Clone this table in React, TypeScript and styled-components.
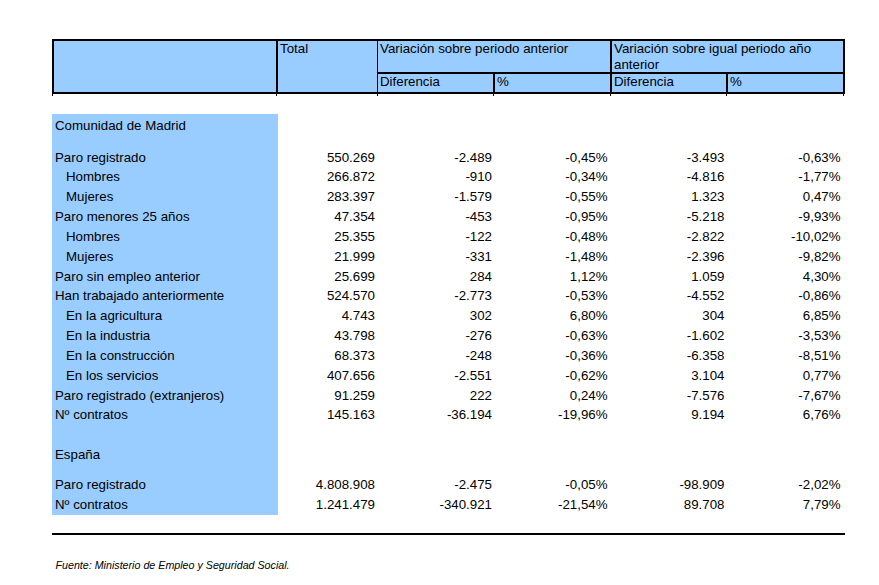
import React from "react";
import styled, { createGlobalStyle } from "styled-components";

type Line = {
    label: string;
    indent?: boolean;
    values: string[];
};

const madrid: Line[] = [
    { label: "Paro registrado", values: ["550.269", "-2.489", "-0,45%", "-3.493", "-0,63%"] },
    { label: "Hombres", indent: true, values: ["266.872", "-910", "-0,34%", "-4.816", "-1,77%"] },
    { label: "Mujeres", indent: true, values: ["283.397", "-1.579", "-0,55%", "1.323", "0,47%"] },
    { label: "Paro menores 25 años", values: ["47.354", "-453", "-0,95%", "-5.218", "-9,93%"] },
    { label: "Hombres", indent: true, values: ["25.355", "-122", "-0,48%", "-2.822", "-10,02%"] },
    { label: "Mujeres", indent: true, values: ["21.999", "-331", "-1,48%", "-2.396", "-9,82%"] },
    { label: "Paro sin empleo anterior", values: ["25.699", "284", "1,12%", "1.059", "4,30%"] },
    { label: "Han trabajado anteriormente", values: ["524.570", "-2.773", "-0,53%", "-4.552", "-0,86%"] },
    { label: "En la agricultura", indent: true, values: ["4.743", "302", "6,80%", "304", "6,85%"] },
    { label: "En la industria", indent: true, values: ["43.798", "-276", "-0,63%", "-1.602", "-3,53%"] },
    { label: "En la construcción", indent: true, values: ["68.373", "-248", "-0,36%", "-6.358", "-8,51%"] },
    { label: "En los servicios", indent: true, values: ["407.656", "-2.551", "-0,62%", "3.104", "0,77%"] },
    { label: "Paro registrado (extranjeros)", values: ["91.259", "222", "0,24%", "-7.576", "-7,67%"] },
    { label: "Nº contratos", values: ["145.163", "-36.194", "-19,96%", "9.194", "6,76%"] }
];

const espana: Line[] = [
    { label: "Paro registrado", values: ["4.808.908", "-2.475", "-0,05%", "-98.909", "-2,02%"] },
    { label: "Nº contratos", values: ["1.241.479", "-340.921", "-21,54%", "89.708", "7,79%"] }
];

// right padding of each numeric column, as the spreadsheet leaves it
const numPad = [3, 3, 4.5, 3.5, 4.5];

const GlobalStyle = createGlobalStyle`
    body {
        margin: 0;
        background: #ffffff;
        color: #000000;
        font-family: "Liberation Sans", Arial, sans-serif;
        font-size: 13.3px;
    }
`;

const Page = styled.div`
    width: 793px;
    padding: 39px 0 0 52px;
`;

const HeaderGrid = styled.div`
    display: grid;
    grid-template-columns: 224px 100px 117px 117px 116px 115px;
    grid-template-rows: 33px 18px;
    border: 2px solid #000;
    background: #99ccff;
`;

const HeadCell = styled.div<{ $col: string; $row: string; $right?: number; $bottom?: number }>`
    grid-column: ${(p) => p.$col};
    grid-row: ${(p) => p.$row};
    border-right: ${(p) => p.$right ?? 0}px solid #000;
    border-bottom: ${(p) => p.$bottom ?? 0}px solid #000;
    padding: 0 2px;
    line-height: 16px;
    overflow: hidden;
`;

const TickRow = styled.div`
    display: grid;
    grid-template-columns: 224px 101px 116px 117px 116px 117px 2px;
    height: 2px;
    margin-bottom: 18px;
`;

const Tick = styled.div`
    border-left: 1px solid #000;
`;

const Row = styled.div<{ $height: number }>`
    display: grid;
    grid-template-columns: 226px 100px 117px 117px 116px 117px;
    height: ${(p) => p.$height}px;
    line-height: ${(p) => p.$height}px;
    white-space: nowrap;
`;

const Label = styled.div<{ $indent?: boolean }>`
    background: #99ccff;
    padding-left: ${(p) => (p.$indent ? 14 : 3)}px;
`;

const TitleLabel = styled.div`
    background: #99ccff;
    padding: 1.5px 0 0 3px;
    line-height: 20px;
`;

const Num = styled.div<{ $pad: number }>`
    text-align: right;
    padding-right: ${(p) => p.$pad}px;
`;

const BottomRule = styled.div`
    height: 2px;
    margin-top: 18px;
    background: #000;
`;

const Source = styled.p`
    margin: 23.8px 0 0;
    padding-left: 3.5px;
    font-size: 10.7px;
    line-height: 13px;
    font-style: italic;
`;

const DataRow = ({ line }: { line: Line }) => (
    <Row $height={19.85}>
        <Label $indent={line.indent}>{line.label}</Label>
        {line.values.map((v, idx) => (
            <Num key={idx} $pad={numPad[idx]}>
                {v}
            </Num>
        ))}
    </Row>
);

const TitleRow = ({ title, height }: { title: string; height: number }) => (
    <Row $height={height}>
        <TitleLabel>{title}</TitleLabel>
    </Row>
);

const App = () => {
    return (
        <Page>
            <GlobalStyle />
            <HeaderGrid>
                <HeadCell $col="1" $row="1 / 3" $right={2} />
                <HeadCell $col="2" $row="1 / 3" $right={1}>
                    Total
                </HeadCell>
                <HeadCell $col="3 / 5" $row="1" $right={2} $bottom={2}>
                    Variación sobre periodo anterior
                </HeadCell>
                <HeadCell $col="5 / 7" $row="1" $bottom={2}>
                    Variación sobre igual periodo año anterior
                </HeadCell>
                <HeadCell $col="3" $row="2" $right={2}>
                    Diferencia
                </HeadCell>
                <HeadCell $col="4" $row="2" $right={2}>
                    %
                </HeadCell>
                <HeadCell $col="5" $row="2" $right={2}>
                    Diferencia
                </HeadCell>
                <HeadCell $col="6" $row="2">
                    %
                </HeadCell>
            </HeaderGrid>
            <TickRow>
                {Array.from({ length: 7 }).map((_, idx) => (
                    <Tick key={idx} />
                ))}
            </TickRow>

            <TitleRow title="Comunidad de Madrid" height={33.5} />
            {madrid.map((line, idx) => (
                <DataRow key={idx} line={line} />
            ))}
            <Row $height={17.8}>
                <Label />
            </Row>
            <TitleRow title="España" height={32} />
            {espana.map((line, idx) => (
                <DataRow key={idx} line={line} />
            ))}

            <BottomRule />
            <Source>Fuente: Ministerio de Empleo y Seguridad Social.</Source>
        </Page>
    );
};

export default App;
